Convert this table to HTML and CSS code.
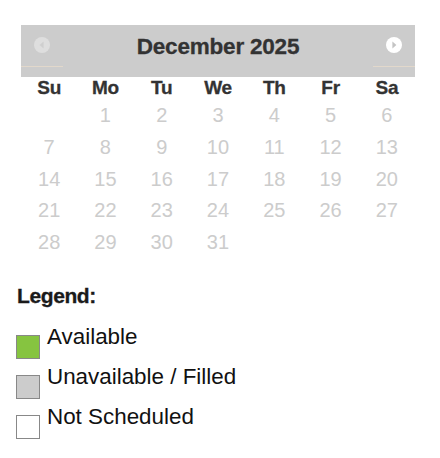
FILE: index.html
```html
<!DOCTYPE html>
<html>
<head>
<meta charset="utf-8">
<link rel="stylesheet" href="styles.css">
</head>
<body>
<div class="page">
  <div class="calendar">
    <div class="cal-header">
      <a class="nav nav-prev" aria-label="Prev">
        <svg width="16" height="16" viewBox="0 0 16 16"><circle cx="8" cy="8" r="8" fill="#dedede"/><path d="M9.6 4.6 L5.6 8 L9.6 11.4 Z" fill="#cfcfcf"/></svg>
      </a>
      <div class="title">December 2025</div>
      <a class="nav nav-next" aria-label="Next">
        <svg width="16" height="16" viewBox="0 0 16 16"><circle cx="8" cy="8" r="8" fill="#ffffff"/><path d="M6.4 4.6 L10.4 8 L6.4 11.4 Z" fill="#c4c4c4"/></svg>
      </a>
    </div>
    <div class="grid dow">
      <span>Su</span><span>Mo</span><span>Tu</span><span>We</span><span>Th</span><span>Fr</span><span>Sa</span>
    </div>
    <div class="grid days">
      <span></span><span>1</span><span>2</span><span>3</span><span>4</span><span>5</span><span>6</span>
      <span>7</span><span>8</span><span>9</span><span>10</span><span>11</span><span>12</span><span>13</span>
      <span>14</span><span>15</span><span>16</span><span>17</span><span>18</span><span>19</span><span>20</span>
      <span>21</span><span>22</span><span>23</span><span>24</span><span>25</span><span>26</span><span>27</span>
      <span>28</span><span>29</span><span>30</span><span>31</span><span></span><span></span><span></span>
    </div>
  </div>
  <div class="legend">
    <div class="legend-title">Legend:</div>
    <div class="legend-item"><span class="swatch swatch-available"></span><span>Available</span></div>
    <div class="legend-item"><span class="swatch swatch-filled"></span><span>Unavailable / Filled</span></div>
    <div class="legend-item"><span class="swatch swatch-none"></span><span>Not Scheduled</span></div>
  </div>
</div>
</body>
</html>
```

FILE: styles.css
```css
html, body {
  margin: 0;
  padding: 0;
  background: #fff;
}
body {
  font-family: "Liberation Sans", Arial, sans-serif;
}
.page {
  padding: 25px 0 0 0;
}
.calendar {
  width: 394px;
  margin-left: 21px;
}
.cal-header {
  height: 52px;
  background: #cccccc;
  display: flex;
  align-items: flex-start;
}
.nav {
  width: 42px;
  height: 41px;
  border-bottom: 1px solid #e2d8cb;
  display: flex;
  align-items: center;
  justify-content: center;
}
.nav svg {
  display: block;
  margin-top: -1px;
}
.title {
  flex: 1;
  text-align: center;
  font-weight: bold;
  font-size: 22.5px;
  letter-spacing: -0.2px;
  color: #333333;
  line-height: 26px;
  padding-top: 9px;
  -webkit-text-stroke: 0.3px #333333;
}
.grid {
  display: grid;
  grid-template-columns: repeat(7, 1fr);
  text-align: center;
}
.dow span {
  font-weight: bold;
  font-size: 19px;
  color: #333333;
  height: 22px;
  line-height: 22px;
  letter-spacing: -0.3px;
  -webkit-text-stroke: 0.3px #333333;
}
.days span {
  font-size: 20px;
  color: #cccccc;
  height: 31.75px;
  line-height: 32px;
}
.legend {
  padding: 26px 0 0 16px;
}
.legend-title {
  font-weight: bold;
  font-size: 21px;
  line-height: 24px;
  color: #1a1a1a;
  margin-left: 1px;
  letter-spacing: -0.4px;
  margin-bottom: 17px;
  -webkit-text-stroke: 0.3px #1a1a1a;
}
.legend-item {
  display: flex;
  align-items: flex-start;
  gap: 7px;
  font-size: 22.4px;
  line-height: 24px;
  color: #111;
  margin-bottom: 6px;
}
.swatch {
  width: 22px;
  height: 22px;
  border: 1px solid #888888;
  margin-top: 10px;
  flex: none;
}
.swatch-available { background: #86c440; }
.swatch-filled { background: #cccccc; }
.swatch-none { background: #ffffff; }
```
